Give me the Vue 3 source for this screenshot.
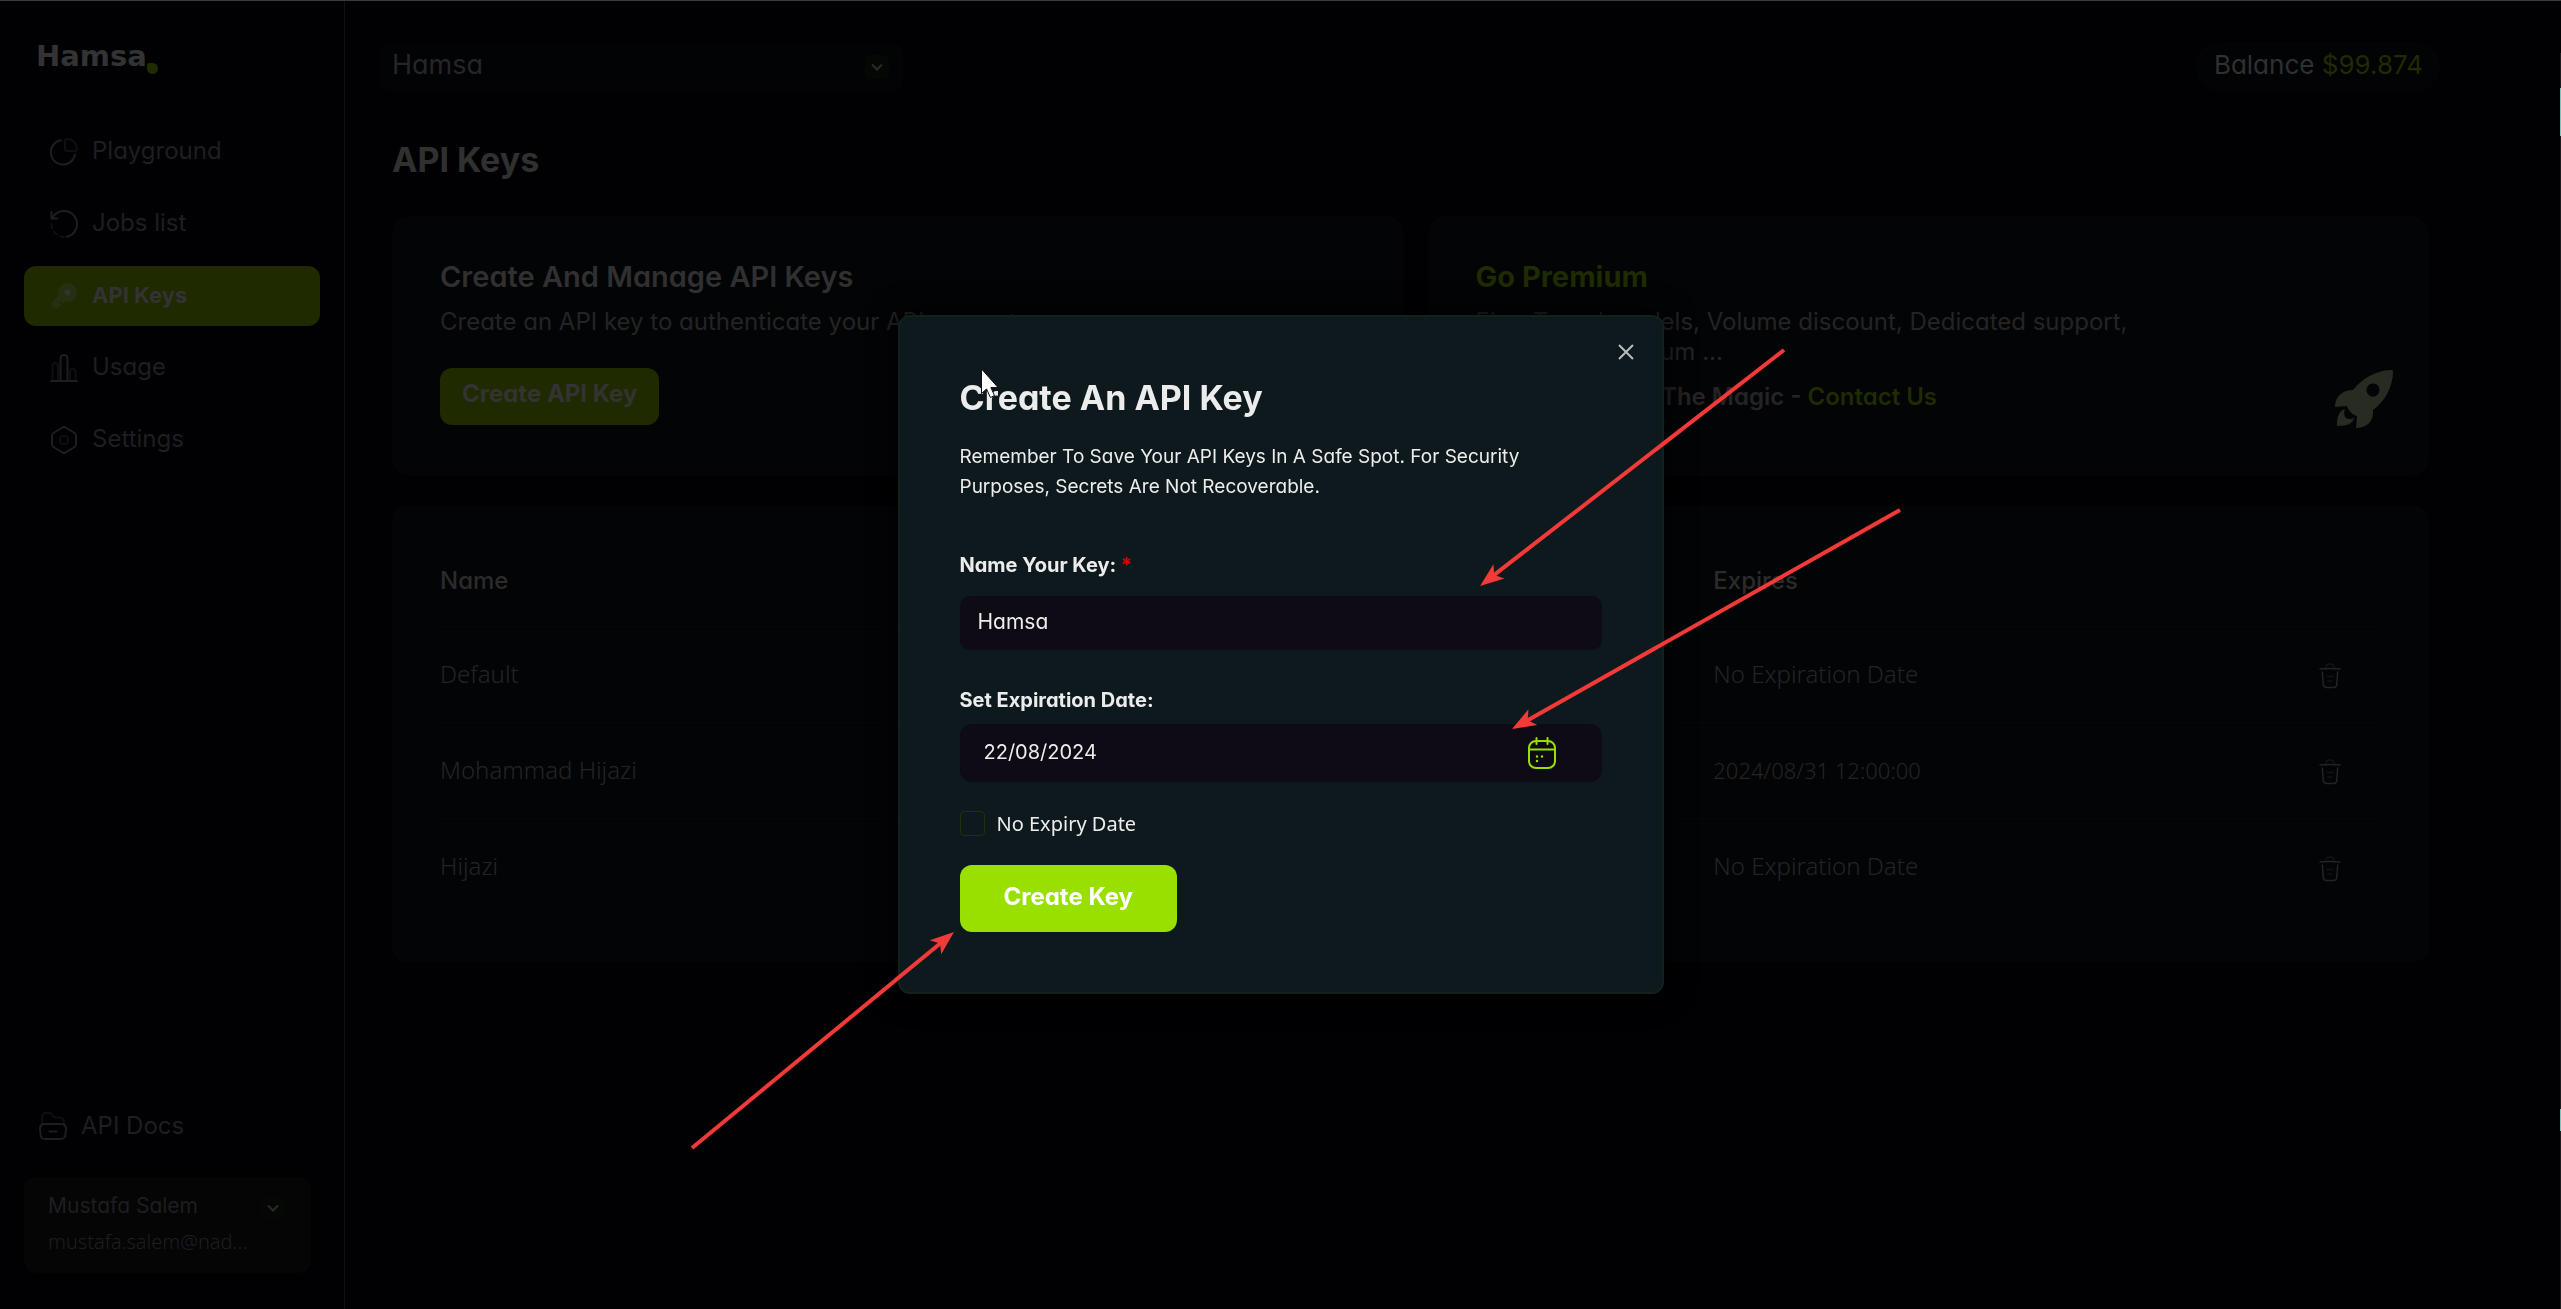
<script setup>
import { ref } from 'vue'

const navItems = [
  { label: 'Playground', icon: 'pie' },
  { label: 'Jobs list', icon: 'history' },
  { label: 'API Keys', icon: 'key', active: true },
  { label: 'Usage', icon: 'bars' },
  { label: 'Settings', icon: 'hex' },
]

const keys = [
  { name: 'Default', expires: 'No Expiration Date' },
  { name: 'Mohammad Hijazi', expires: '2024/08/31 12:00:00', dated: true },
  { name: 'Hijazi', expires: 'No Expiration Date' },
]

const arrows = [
  { from: [1784, 350], to: [1480, 586] },
  { from: [1900, 510], to: [1512, 729] },
  { from: [692, 1148], to: [954, 932] },
].map(({ from, to }) => {
  const length = Math.hypot(to[0] - from[0], to[1] - from[1])
  const angle = (Math.atan2(to[1] - from[1], to[0] - from[0]) * 180) / Math.PI
  return { length, transform: `translate(${to[0]} ${to[1]}) rotate(${angle})` }
})

const project = ref('Hamsa')
const keyName = ref('Hamsa')
const expiry = ref('22/08/2024')
const noExpiry = ref(false)
</script>

<template>
  <div class="app">
    <aside class="sidebar">
      <a class="logo" href="#">Hamsa<span class="logo-dot"></span></a>

      <nav class="nav">
        <a
          v-for="item in navItems"
          :key="item.label"
          href="#"
          class="nav-item"
          :class="{ active: item.active }"
        >
          <svg class="icon" viewBox="0 0 28 28" fill="none" stroke="currentColor" stroke-width="2" stroke-linecap="round" stroke-linejoin="round">
            <template v-if="item.icon === 'pie'">
              <path d="M11 2.300A12.200 12.200 0 1 0 25 16.500" />
              <path class="faint" d="M15 3.500C15 2 16 1 17.500 1A9.500 9.500 0 0 1 27 10.500C27 12 26 13 24.500 13H17C15.800 13 15 12.200 15 11Z" />
            </template>
            <template v-else-if="item.icon === 'history'">
              <path d="M1.500 2V8.500H7.500" />
              <path d="M2.500 8A13 13 0 1 1 17 26.700" />
              <path class="faint" d="M1.500 14A13 13 0 0 0 14 27" stroke-dasharray="4 4" />
            </template>
            <template v-else-if="item.icon === 'key'">
              <path fill="currentColor" stroke="none" fill-rule="evenodd" d="M17.500 1a9.500 9.500 0 1 1-2.600 18.600l-1.700 1.900-2-2-1.200 1.200 2 2-2.200 2.400c-1 1-2 1.400-3.300 1.300l-2.500-.2C2.700 26 2 25.300 1.900 24l-.2-1.700c-.1-1.200.3-2.200 1.100-3L8.400 13.500A9.500 9.500 0 0 1 17.500 1Z" />
              <circle class="key-hole" cx="17.500" cy="10.500" r="3" stroke="none" />
            </template>
            <template v-else-if="item.icon === 'bars'">
              <path d="M1 27H27" />
              <path d="M10.500 27V4.500C10.500 2.500 11.500 1 14 1S17.500 2.500 17.500 4.500V27" />
              <path class="faint" d="M2.500 26V12C2.500 10 3.500 9 5.200 9S8 10 8 12V26M20 26V18C20 16 21 15 22.800 15S25.500 16 25.500 18V26" />
            </template>
            <template v-else>
              <path d="M12.500 1.500Q14 .700 15.500 1.500L24.500 7Q26 8 26 9.500V18.500Q26 20 24.500 21L15.500 26.500Q14 27.300 12.500 26.500L3.500 21Q2 20 2 18.500V9.500Q2 8 3.500 7Z" />
              <circle class="faint" cx="14" cy="14" r="4.200" />
            </template>
          </svg>
          <span class="nav-label">{{ item.label }}</span>
        </a>
      </nav>

      <a class="docs" href="#">
        <svg class="icon" viewBox="0 0 28 28" fill="none" stroke="currentColor" stroke-width="2" stroke-linecap="round" stroke-linejoin="round">
          <path class="faint" d="M3 12V5Q3 1 7 1H10Q12 1 13.300 3L14.500 4.500Q15.300 5.500 17 5.500H20Q25 5.500 25 10V12" />
          <path d="M6 12H22Q27 12 27 16.500L26.500 22.500Q26 27 21.500 27H6.500Q2 27 1.500 22.500L1 16.500Q1 12 6 12Z" />
          <path d="M10.500 19.500H17.500" />
        </svg>
        API Docs
      </a>

      <button class="user" type="button">
        <span class="user-text">
          <span class="user-name">Mustafa Salem</span>
          <span class="user-mail">mustafa.salem@nad...</span>
        </span>
        <span class="chevron">
          <svg viewBox="0 0 12 8" fill="none" stroke="currentColor" stroke-width="2"><path d="M1 1.500 6 6.500 11 1.500" /></svg>
        </span>
      </button>
    </aside>

    <main class="main">
      <header class="topbar">
        <div class="project">
          <select v-model="project" aria-label="Project">
            <option>Hamsa</option>
          </select>
          <span class="chevron">
            <svg viewBox="0 0 12 8" fill="none" stroke="currentColor" stroke-width="2"><path d="M1 1.500 6 6.500 11 1.500" /></svg>
          </span>
        </div>
        <div class="balance">Balance <span class="green">$99.874</span></div>
      </header>

      <div class="content">
        <h1>API Keys</h1>

        <div class="cards">
          <section class="card">
            <h2>Create And Manage API Keys</h2>
            <p>Create an API key to authenticate your API requests.</p>
            <button class="dim-button" type="button">Create API Key</button>
          </section>
          <section class="card premium">
            <div class="premium-text">
              <h2 class="green">Go Premium</h2>
              <p>Fine-Tuned models, Volume discount, Dedicated support, Unlimited, premium ...</p>
              <p class="magic">Time To Unlock The Magic - <a class="green" href="#">Contact Us</a></p>
            </div>
            <svg class="rocket" viewBox="0 0 58 58" fill="currentColor">
              <path fill-rule="evenodd" d="M57 0C58 0 58 1 58 2C58 15 51 31 38 40C39 51 32 58 21 58L22 46C18 45 13 41 12 36L0 37C0 27 7 20 18 20C28 7 43 0 57 0ZM38 13.500a6.500 6.500 0 1 0 .010 0Z" />
              <path d="M10 39C8 44 10 49 14 49C16 49.500 18 48.500 19 47.500C18 53 14 56 2 56C2 48 3 41 10 39Z" />
            </svg>
          </section>
        </div>

        <section class="table-card">
          <table>
            <thead>
              <tr>
                <th class="col-name">Name</th>
                <th>Expires</th>
                <th class="col-action"></th>
              </tr>
            </thead>
            <tbody>
              <tr v-for="row in keys" :key="row.name">
                <td>{{ row.name }}</td>
                <td :class="{ dated: row.dated }">{{ row.expires }}</td>
                <td class="col-action">
                  <button class="trash" type="button" :aria-label="`Delete ${row.name}`">
                    <svg viewBox="0 0 22 26" fill="none" stroke="currentColor" stroke-width="1.500" stroke-linecap="round">
                      <path class="faint" d="M7 4.500Q7 1 11 1T15 4.500" />
                      <path d="M1 6Q11 5 21 6" />
                      <path d="M3.300 9 4.300 21.500Q4.500 24.500 7.500 24.500H14.500Q17.500 24.500 17.700 21.500L18.700 9" />
                      <path class="faint" d="M8 13.500H14M9 18H13" />
                    </svg>
                  </button>
                </td>
              </tr>
            </tbody>
          </table>
        </section>
      </div>
    </main>

    <div class="backdrop">
      <form class="modal" role="dialog" aria-labelledby="modal-title" @submit.prevent>
        <button class="close" type="button" aria-label="Close">
          <svg viewBox="0 0 16 16" fill="none" stroke="currentColor" stroke-width="2"><path d="M1 1 15 15M15 1 1 15" /></svg>
        </button>
        <h2 id="modal-title">Create An API Key</h2>
        <p>Remember To Save Your API Keys In A Safe Spot. For Security Purposes, Secrets Are Not Recoverable.</p>

        <label class="field-label" for="key-name">Name Your Key: <span class="required">*</span></label>
        <input id="key-name" v-model="keyName" class="field" type="text" />

        <label class="field-label date-label" for="key-expiry">Set Expiration Date:</label>
        <div class="date-field">
          <input id="key-expiry" v-model="expiry" class="field" type="text" />
          <svg class="calendar" viewBox="0 0 28 32" fill="none" stroke="currentColor" stroke-width="2" stroke-linecap="round">
            <rect x="1" y="4" width="26" height="27" rx="7" />
            <path d="M1 12.500H27M8.500 1V7M19.500 1V7" />
            <path d="M9 19.500h.010M14 19.500h.010M9 24h.010" stroke-width="2.500" />
          </svg>
        </div>

        <label class="check">
          <input v-model="noExpiry" type="checkbox" />
          No Expiry Date
        </label>

        <button class="submit" type="submit">Create Key</button>
      </form>
    </div>

    <svg class="annotations" aria-hidden="true">
      <path class="cursor" d="M981.500 369V393.500L986.500 389 990.500 397.500 994.500 395.500 990.800 387.500H998Z" />
      <g v-for="(arrow, i) in arrows" :key="i" :transform="arrow.transform">
        <line :x1="-arrow.length" y1="0" x2="-16" y2="0" />
        <path class="head" d="M0 0-24-9-18 0-24 9Z" />
      </g>
    </svg>
    <div class="edge"></div>
  </div>
</template>

<style>
body {
  background: #010103;
}
</style>

<style scoped>
* {
  box-sizing: border-box;
}

.app {
  display: flex;
  min-height: 100vh;
  border-top: 1px solid #3a3a40;
  background: #010103;
  color: #303030;
  font: 400 24px/30px Inter, "Liberation Sans", sans-serif;
  font-feature-settings: "cv11";
}

a {
  color: inherit;
  text-decoration: none;
}

button,
input,
select {
  margin: 0;
  border: 0;
  font: inherit;
  font-feature-settings: inherit;
  color: inherit;
}

h1,
h2,
p {
  margin: 0;
}

.faint {
  opacity: 0.5;
}

.green {
  color: #1f2b00;
}

/* Sidebar */
.sidebar {
  display: flex;
  flex: 0 0 345px;
  flex-direction: column;
  padding: 35px 24px 36px;
  border-right: 1px solid #121214;
  color: #1e1e20;
}

.logo {
  display: flex;
  align-items: flex-end;
  height: 40px;
  padding-left: 12px;
  color: #333;
  font: 700 29px/40px "DejaVu Sans", sans-serif;
}

.logo-dot {
  width: 11px;
  height: 11px;
  margin-bottom: 2px;
  border-radius: 2px 6px 6px 6px;
  background: #1f2b00;
}

.nav {
  display: flex;
  flex-direction: column;
  gap: 12px;
  margin-top: 46px;
}

.nav-item {
  display: flex;
  align-items: center;
  gap: 14px;
  height: 60px;
  padding-left: 26px;
  border-radius: 12px;
}

.nav-label {
  padding-bottom: 3px;
}

.nav-item.active {
  background: #1f2a00;
  color: #263010;
  font-size: 22px;
  font-weight: 700;
}

.nav-item.active .nav-label {
  color: #333;
}

.key-hole {
  fill: #333;
}

.icon {
  flex: none;
  width: 28px;
  height: 28px;
}

.docs {
  display: flex;
  align-items: center;
  gap: 14px;
  margin: auto 0 36px 15px;
}

.user {
  display: flex;
  align-items: flex-start;
  justify-content: space-between;
  width: 287px;
  height: 96px;
  padding: 14px 26px 0 24px;
  border-radius: 12px;
  background: #050506;
  text-align: left;
}

.user-text {
  display: flex;
  flex-direction: column;
  gap: 6px;
  font-size: 21px;
}

.user-mail {
  font-family: "Noto Sans", sans-serif;
  font-size: 20px;
  font-weight: 300;
}

.chevron {
  display: flex;
  flex: none;
  align-items: center;
  justify-content: center;
  width: 24px;
  height: 24px;
  border-radius: 6px;
  background: #050705;
  color: #2a2a2a;
}

.user .chevron {
  margin-top: 5px;
}

.chevron svg {
  width: 12px;
  height: 8px;
}

/* Main column */
.main {
  flex: 1;
  min-width: 0;
}

.topbar {
  display: flex;
  align-items: center;
  justify-content: space-between;
  height: 50px;
  margin: 41px 121px 0 35px;
}

.project {
  display: flex;
  align-items: center;
  width: 523px;
  height: 48px;
  padding-right: 14px;
  border-radius: 10px;
  background: #020304;
  color: #262626;
}

.project select {
  flex: 1;
  height: 44px;
  padding: 0 12px 4px;
  appearance: none;
  background: transparent;
  font-size: 27px;
}

.balance {
  padding: 8px 17px 12px 19px;
  border-radius: 25px;
  background: #020304;
  font-size: 26px;
}

.content {
  margin: 48px 132px 0 47px;
}

h1 {
  font-size: 34px;
  line-height: 40px;
}

.cards {
  display: flex;
  gap: 24px;
  margin-top: 36px;
}

.card {
  flex: 1012 1 0;
  min-height: 260px;
  padding: 43px 36px 48px 48px;
  border-radius: 18px;
  background: #030406;
  color: #242424;
}

.card h2 {
  margin-bottom: 12px;
  color: #303030;
  font-size: 29px;
  font-weight: 600;
  line-height: 36px;
}

.card .green {
  color: #1f2b00;
}

.dim-button {
  height: 57px;
  margin-top: 31px;
  padding: 0 22px 6px;
  border-radius: 12px;
  background: #1f2a00;
  color: #333;
  font-weight: 700;
}

.premium {
  display: flex;
  flex-grow: 1001;
  align-items: flex-end;
  justify-content: space-between;
}

.premium-text {
  flex: 0 1 700px;
  align-self: flex-start;
}

.card.premium h2 {
  font-weight: 700;
}

.magic {
  margin-top: 15px;
  font-weight: 600;
}

.rocket {
  width: 58px;
  height: 58px;
  color: #272b22;
}

.table-card {
  margin-top: 30px;
  padding: 30px 48px 48px;
  border-radius: 14px;
  background: #030406;
}

table {
  width: 100%;
  border-collapse: collapse;
}

th,
td {
  height: 96px;
  padding: 0;
  border-top: 1px solid #060708;
  text-align: left;
}

th {
  height: 90px;
  border: 0;
  color: #2b2b2b;
  font-weight: 500;
}

td {
  color: #242424;
  font-family: "Noto Sans", sans-serif;
  font-weight: 300;
}

.dated {
  font-size: 22px;
}

.col-name {
  width: 65.6%;
}

.col-action {
  padding-right: 40px;
  text-align: right;
}

.trash {
  width: 22px;
  height: 26px;
  padding: 0;
  background: transparent;
  vertical-align: middle;
}

.trash svg {
  display: block;
}

/* Modal */
.backdrop {
  position: fixed;
  inset: 0;
  display: flex;
  align-items: center;
  justify-content: center;
}

.modal {
  position: relative;
  width: 766px;
  padding: 61px 60px 60px;
  border: 2px solid #11211c;
  border-radius: 12px;
  background: #0e191d;
  box-shadow: 0 0 30px #000;
  color: #ececec;
  font-size: 20px;
}

.close {
  position: absolute;
  top: 26px;
  right: 27px;
  width: 18px;
  height: 18px;
  padding: 1px;
  background: transparent;
  color: #b9bcbd;
}

.close svg {
  display: block;
}

.modal h2 {
  font-size: 34px;
  line-height: 40px;
}

.modal p {
  margin: 24px 0 48px;
  font-size: 19px;
}

.field-label {
  display: block;
  margin-bottom: 16px;
  font-weight: 700;
}

.date-label {
  margin: 35px 0 9px;
}

.required {
  color: #e00000;
}

.field {
  display: block;
  width: 100%;
  height: 54px;
  padding: 0 18px 3px;
  border-radius: 10px;
  background: #0e0b15;
  font-size: 21px;
}

.date-field {
  display: flex;
  align-items: center;
  height: 58px;
  padding-right: 46px;
  border-radius: 12px;
  background: #0e0b15;
}

.date-field .field {
  flex: 1;
  padding-left: 24px;
  font-size: 20px;
}

.calendar {
  flex: none;
  width: 28px;
  height: 32px;
  color: #99e000;
}

.check {
  display: flex;
  align-items: center;
  gap: 12px;
  height: 25px;
  margin: 29px 0;
  font-family: "Noto Sans", sans-serif;
}

.check input {
  width: 25px;
  height: 25px;
  appearance: none;
  border: 1px solid #203008;
  border-radius: 4px;
}

.submit {
  display: block;
  height: 67px;
  padding: 0 44px 4px;
  border-radius: 12px;
  background: #99e000;
  color: #fff;
  font-size: 24px;
  font-weight: 700;
}

/* Pointer and arrows laid over the screen */
.annotations {
  position: fixed;
  inset: 0;
  width: 100%;
  height: 100%;
  pointer-events: none;
}

.annotations line {
  stroke: #f43a38;
  stroke-width: 4;
}

.annotations .head {
  fill: #f43a38;
}

.cursor {
  fill: #fff;
  stroke: #111;
}

.edge {
  position: fixed;
  top: 53px;
  right: 0;
  bottom: 0;
  width: 1px;
  background: linear-gradient(#1c1c1e 35px, #7cc4bc 35px 83px, #1c1c1e 83px 1056px, #7cc4bc 1056px 1078px, #1c1c1e 1078px);
}
</style>
